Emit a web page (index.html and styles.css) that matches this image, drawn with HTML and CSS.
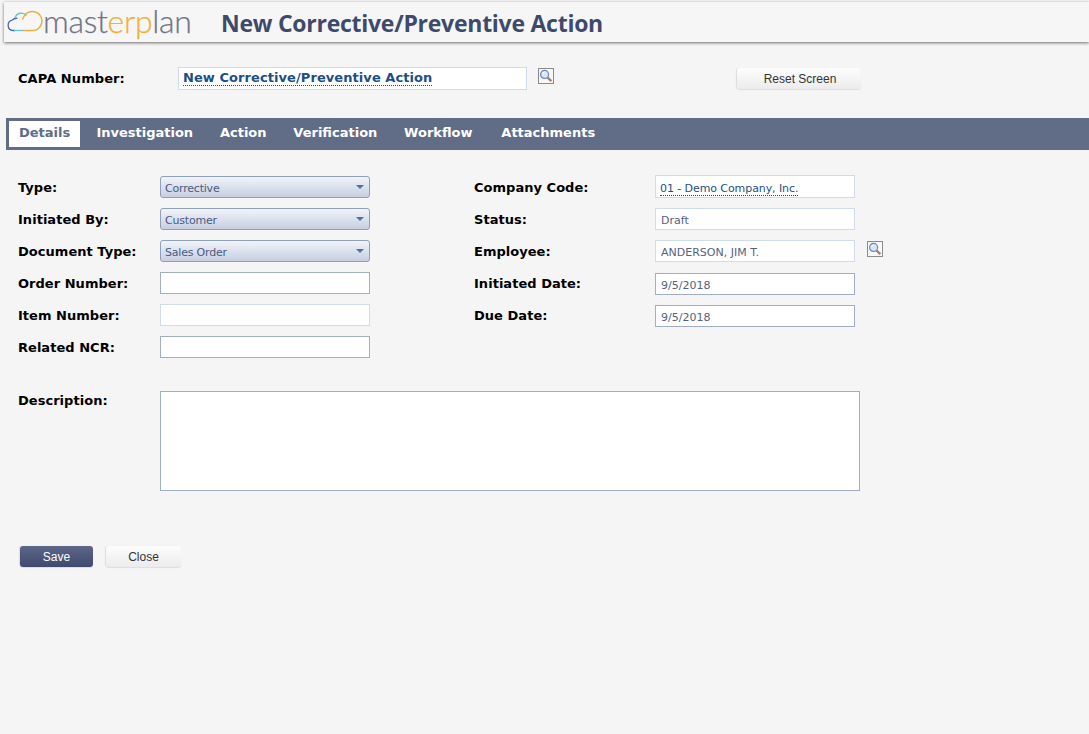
FILE: index.html
```html
<!DOCTYPE html>
<html lang="en">
<head>
<meta charset="utf-8">
<title>New Corrective/Preventive Action</title>
<link rel="stylesheet" href="styles.css">
</head>
<body>
<svg class="defs" width="0" height="0" aria-hidden="true">
  <symbol id="mag" viewBox="0 0 16 16">
    <rect x="0.5" y="0.5" width="15" height="15" fill="#f8f8f8" stroke="#8a8a90"/>
    <path d="M9.500 9.500l3.800 3.600" stroke="#b07d5c" stroke-width="2.400" fill="none"/>
    <circle cx="6.600" cy="6.400" r="4" fill="#d9e6f7" stroke="#6f86b8" stroke-width="1.200"/>
    <path d="M4.600 6.200a2.200 2.200 0 0 1 2-2" stroke="#fff" fill="none"/>
  </symbol>
</svg>
<header class="header">
  <div class="logo">
    <svg class="cloud" viewBox="0 0 38 26" width="38" height="26" aria-hidden="true">
      <path d="M9 22.500H7a5.200 5.200 0 0 1-.6-10.300" fill="none" stroke="#4a67b0" stroke-width="1.300"/>
      <path d="M6.400 12.200a5 5 0 0 1 5-1.800" fill="none" stroke="#4a67b0" stroke-width="1.300"/>
      <path d="M9 9.500a6.800 6.800 0 0 1 11.500-2" fill="none" stroke="#62c6d6" stroke-width="1.300"/>
      <path d="M8 22.500h10.500" fill="none" stroke="#62c6d6" stroke-width="1.300"/>
      <path d="M18 22.500h8.500a9.500 9.500 0 1 0-8-14.800q-1.500 2-2 3.800" fill="none" stroke="#eeb13c" stroke-width="1.500"/>
    </svg>
    <span class="logo-text">mast<span class="logo-accent">erp</span>lan</span>
  </div>
  <h1 class="title">New Corrective/Preventive Action</h1>
</header>

<section class="capa">
  <label class="capa-label">CAPA Number:</label>
  <div class="capa-field"><a class="link">New Corrective/Preventive Action</a></div>
  <svg class="mag capa-mag"><use href="#mag"/></svg>
  <button class="btn reset" type="button">Reset Screen</button>
</section>

<nav class="tabs">
  <span class="tab active">Details</span>
  <span class="tab">Investigation</span>
  <span class="tab">Action</span>
  <span class="tab">Verification</span>
  <span class="tab">Workflow</span>
  <span class="tab">Attachments</span>
</nav>

<main class="form">
  <div class="col">
    <div class="row"><label>Type:</label><div class="combo">Corrective<i class="arrow"></i></div></div>
    <div class="row"><label>Initiated By:</label><div class="combo">Customer<i class="arrow"></i></div></div>
    <div class="row"><label>Document Type:</label><div class="combo">Sales Order<i class="arrow"></i></div></div>
    <div class="row"><label>Order Number:</label><div class="input edit"></div></div>
    <div class="row"><label>Item Number:</label><div class="input"></div></div>
    <div class="row"><label>Related NCR:</label><div class="input edit"></div></div>
  </div>
  <div class="col right">
    <div class="row"><label>Company Code:</label><div class="input company"><a class="link small">01 - Demo Company, Inc.</a></div></div>
    <div class="row"><label>Status:</label><div class="input">Draft</div></div>
    <div class="row"><label>Employee:</label><div class="input">ANDERSON, JIM T.</div><svg class="mag emp-mag"><use href="#mag"/></svg></div>
    <div class="row"><label>Initiated Date:</label><div class="input edit">9/5/2018</div></div>
    <div class="row"><label>Due Date:</label><div class="input edit">9/5/2018</div></div>
  </div>
</main>

<section class="desc">
  <label>Description:</label>
  <div class="textarea"></div>
</section>

<footer class="actions">
  <button class="btn save" type="button">Save</button>
  <button class="btn close" type="button">Close</button>
</footer>
</body>
</html>
```
FILE: styles.css
```css
* { box-sizing: border-box; }
html, body { margin: 0; height: 100%; }
body {
  background: #f5f5f5;
  font-family: "DejaVu Sans", sans-serif;
  color: #000;
  overflow: hidden;
}
.defs { position: absolute; }
.header {
  margin: 2px 0 0 4px;
  height: 40px;
  display: flex;
  align-items: center;
  background: #f6f6f6;
  box-shadow: 0 1px 3px rgba(0,0,0,.55);
}
.logo { display: flex; align-items: center; width: 217px; height: 40px; flex: none; }
.cloud { margin: 0 0 2px 2px; flex: none; }
.logo-text {
  font-family: "Lato", sans-serif;
  font-weight: 300;
  font-size: 32px;
  letter-spacing: -0.3px;
  color: #6f7488;
  margin: -4px 0 0 -1px;
  -webkit-text-stroke: 0.25px currentColor;
}
.logo-accent { color: #eeb13c; }
.title {
  margin: 2px 0 0;
  font-family: "Open Sans", sans-serif;
  font-size: 23px;
  font-weight: 700;
  color: #3e4a6c;
  letter-spacing: -0.26px;
}
.capa { display: flex; align-items: flex-start; height: 76px; padding: 25px 0 0 18px; }
.capa-label { width: 160px; font-size: 13px; font-weight: 700; line-height: 22px; padding-top: 1px; letter-spacing: 0.07px; }
.capa-field {
  width: 349px;
  height: 23px;
  background: #fff;
  border: 1px solid #cfdcee;
  padding: 0 4px;
  line-height: 18px;
}
.link {
  color: #1c4f86;
  font-size: 13px;
  font-weight: 700;
  letter-spacing: 0.07px;
  border-bottom: 1px dotted #1c4f86;
}
.link.small { font-size: 11px; font-weight: 400; letter-spacing: -0.08px; }
.mag { width: 16px; height: 16px; display: block; flex: none; }
.capa-mag { margin: 1px 0 0 11px; }
.btn {
  font-family: "Liberation Sans", sans-serif;
  font-size: 12px;
  border: 0;
  border-radius: 3px;
  height: 21px;
  padding: 0;
  color: #333;
  background: linear-gradient(#fdfdfd, #ececec);
  box-shadow: -1px 0 1px #ddd, 0 1px 1px #ddd;
}
.reset { width: 124px; margin: 1px 0 0 183px; padding-left: 2px; }
.tabs {
  margin-left: 6px;
  height: 32px;
  background: #616c87;
  display: flex;
  align-items: flex-start;
  padding: 3px 0 0 3px;
}
.tab {
  font-size: 13px;
  font-weight: 700;
  line-height: 23px;
  height: 26px;
  color: #fff;
  padding: 0 13.4px;
}
.tab:last-child { margin-left: 2px; }
.tab.active { background: #fff; color: #616c87; padding: 0 10px; width: 71px; margin-right: 3px; }
.form { display: flex; padding: 26px 0 0 18px; }
.col { width: 456px; display: flex; flex-direction: column; gap: 10px; }
.row { display: flex; align-items: center; height: 22px; }
.row label, .desc label { width: 142px; font-size: 13px; font-weight: 700; letter-spacing: 0.03px; }
.right label { width: 181px; }
.right .input { width: 200px; }
.combo, .input {
  width: 210px;
  height: 22px;
  font-size: 11px;
  color: #555f80;
  padding: 1px 0 0 5px;
  line-height: 21px;
}
.combo {
  position: relative;
  border: 1px solid #8f9ebf;
  border-radius: 3px;
  background: linear-gradient(#f0f3f9, #c6cfe2);
  color: #4c5a80;
  padding-left: 4px;
  letter-spacing: -0.2px;
}
.arrow {
  position: absolute;
  right: 5px;
  top: 8px;
  border: 4px solid transparent;
  border-top: 4px solid #5a6c9a;
  border-bottom: 0;
}
.input { background: #fff; border: 1px solid #d0dcec; }
.input.edit { border-color: #a0aec8; }
.right .edit { margin-top: 2px; }
.right .company { height: 23px; margin-top: -1px; padding: 2px 0 0 4px; }
.emp-mag { margin-left: 12px; margin-top: -4px; }
.desc { display: flex; align-items: flex-start; padding: 33px 0 0 18px; }
.desc label { padding-top: 2px; line-height: 16px; }
.textarea { width: 700px; height: 100px; background: #fff; border: 1px solid #a0aec8; }
.actions { display: flex; gap: 13px; padding: 55px 0 0 20px; }
.save {
  width: 73px;
  color: #fff;
  background: linear-gradient(#5b6688, #3f4a6e);
}
.close { width: 75px; }
```
